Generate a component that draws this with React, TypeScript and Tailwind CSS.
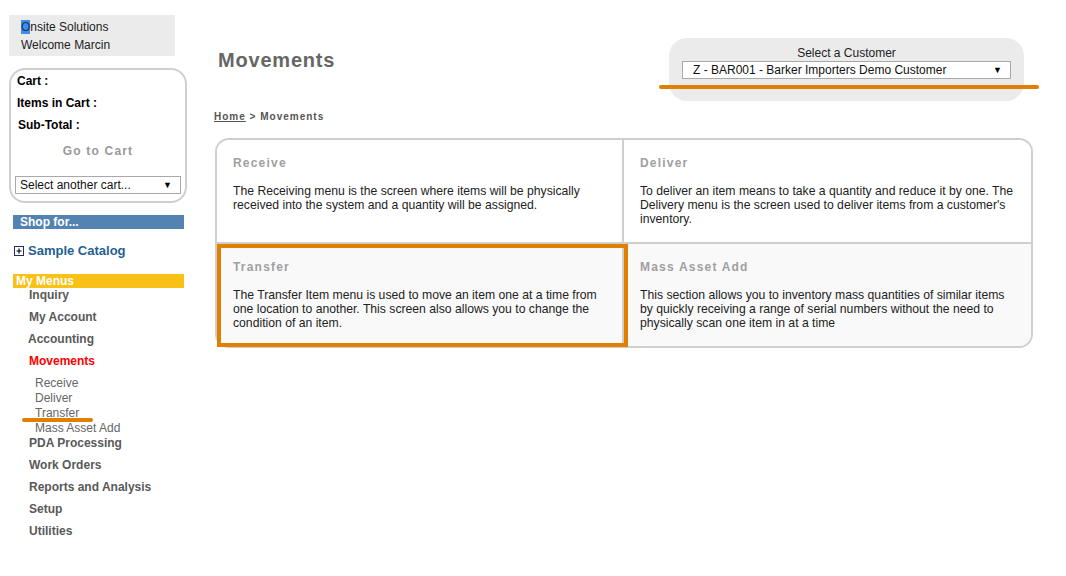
import React from 'react';

const menus = [
    { label: 'Inquiry', sub: false },
    { label: 'My Account', sub: false },
    { label: 'Accounting', sub: false, nudge: true },
    { label: 'Movements', sub: false, active: true },
    { label: 'Receive', sub: true },
    { label: 'Deliver', sub: true },
    { label: 'Transfer', sub: true, marked: true },
    { label: 'Mass Asset Add', sub: true },
    { label: 'PDA Processing', sub: false },
    { label: 'Work Orders', sub: false },
    { label: 'Reports and Analysis', sub: false },
    { label: 'Setup', sub: false },
    { label: 'Utilities', sub: false },
];

const tiles = [
    {
        title: 'Receive',
        text: 'The Receiving menu is the screen where items will be physically received into the system and a quantity will be assigned.',
    },
    {
        title: 'Deliver',
        text: "To deliver an item means to take a quantity and reduce it by one. The Delivery menu is the screen used to deliver items from a customer's inventory.",
    },
    {
        title: 'Transfer',
        text: 'The Transfer Item menu is used to move an item one at a time from one location to another. This screen also allows you to change the condition of an item.',
        marked: true,
    },
    {
        title: 'Mass Asset Add',
        text: 'This section allows you to inventory mass quantities of similar items by quickly receiving a range of serial numbers without the need to physically scan one item in at a time',
    },
];

const FakeSelect = ({ label, className }: { label: string; className: string }) => (
    <div className={`flex items-center justify-between border border-[#a9a9a9] bg-white text-[12px] leading-[16px] text-[#111] ${className}`}>
        <span>{label}</span>
        <span className="text-[9px] text-black">▼</span>
    </div>
);

const Sidebar = () => {
    return (
        <div className="w-[214px] shrink-0 pl-[9px] pt-[15px]">
            <div className="h-[41px] w-[166px] bg-[#ebebeb] px-[12px] pt-[3px] text-[12px] leading-[18px] text-[#222]">
                <div>
                    <span className="bg-[#3d8ee8] text-[#1b3560]">O</span>nsite Solutions
                </div>
                <div>Welcome Marcin</div>
            </div>

            <div className="mt-[12px] h-[135px] w-[178px] rounded-[16px] border-2 border-[#cfcfcf]">
                <div className="pl-[6px] text-[12px] font-bold leading-[22px] text-black">
                    <div>Cart :</div>
                    <div>Items in Cart :</div>
                    <div className="pl-[1px]">Sub-Total :</div>
                </div>
                <div className="h-[30px] text-center text-[12px] font-bold leading-[30px] tracking-[1.2px] text-[#999]">Go to Cart</div>
                <FakeSelect label="Select another cart..." className="mx-[4px] mt-[10px] h-[18px] pl-[4px] pr-[8px]" />
            </div>

            <div className="ml-[4px] mt-[12px] h-[14px] w-[171px] bg-[#5283b1] pl-[7px] text-[12px] font-bold leading-[14px] text-white">Shop for...</div>

            <div className="ml-[5px] mt-[12px] flex h-[20px] items-center gap-[4px]">
                <svg width="10" height="10" viewBox="0 0 10 10">
                    <rect x="0.5" y="0.5" width="9" height="9" fill="white" stroke="#1b2f6b" />
                    <path d="M2.5 5h5M5 2.5v5" stroke="#000" strokeWidth="1.2" />
                </svg>
                <span className="text-[13px] font-bold leading-[20px] text-[#1f5f96]">Sample Catalog</span>
            </div>

            <div className="ml-[4px] mt-[13px] h-[14px] w-[171px] bg-[#f9c016] pl-[3px] text-[12px] font-bold leading-[14px] text-white">My Menus</div>

            <div className="flex flex-col">
                {menus.map((m, i) => {
                    const prev = menus[i - 1];
                    let gap = 'mt-[8px]';
                    if (i === 0) gap = 'mt-0';
                    else if (prev.sub) gap = 'mt-[1px]';
                    return (
                        <div
                            key={m.label}
                            className={`relative h-[14px] text-[12px] leading-[14px] ${gap} ${
                                m.sub ? 'pl-[26px] font-normal text-[#666]' : m.nudge ? 'pl-[19px] font-bold' : 'pl-[20px] font-bold'
                            } ${m.active ? 'text-[#ff0000]' : m.sub ? '' : 'text-[#595959]'}`}
                        >
                            {m.label}
                            {m.marked && <div className="absolute left-[13px] top-[12px] h-[4px] w-[71px] rounded-full bg-[#e07f00]" />}
                        </div>
                    );
                })}
            </div>
        </div>
    );
};

const Tile = ({ title, text, marked, bottom, left }: { title: string; text: string; marked?: boolean; bottom: boolean; left: boolean }) => (
    <div
        className={`relative h-full px-[16px] pt-[16px] ${bottom ? 'bg-[#f9f9f9]' : 'border-b-2 border-[#cfcfcf] bg-white'} ${
            left ? 'border-r-2 border-r-[#cfcfcf]' : ''
        }`}
    >
        <div className="text-[12px] font-bold leading-[14px] tracking-[1.2px] text-[#a0a0a0]">{title}</div>
        <p className="mt-[14px] text-[12.2px] leading-[14px] text-[#222]">{text}</p>
        {marked && <div className="absolute -bottom-[1px] left-0 -right-[6px] top-0 z-10 border-4 border-[#e07f00]" />}
    </div>
);

export default function App() {
    return (
        <div className="flex min-h-[576px] bg-white font-['Liberation_Sans',Arial,sans-serif]">
            <Sidebar />
            <div className="w-[819px] pt-[38px]">
                <div className="flex items-start justify-between">
                    <h1 className="ml-[4px] mt-[10px] text-[20px] font-bold leading-[24px] tracking-[0.8px] text-[#666]">Movements</h1>
                    <div className="relative mr-[9px] h-[63px] w-[355px] rounded-[18px] bg-[#ebebeb] pt-[8px]">
                        <div className="text-center text-[12px] leading-[14px] text-[#222]">Select a Customer</div>
                        <FakeSelect label="Z - BAR001 - Barker Importers Demo Customer" className="mx-[13px] mt-[1px] h-[18px] pl-[10px] pr-[8px]" />
                        <div className="absolute -left-[10px] -right-[15px] top-[47px] h-[4px] rounded-full bg-[#e07f00]" />
                    </div>
                </div>

                <div className="mt-[10px] text-[10px] font-bold leading-[12px] tracking-[1px] text-[#555]">
                    <span className="underline">Home</span> &gt; Movements
                </div>

                <div className="ml-[1px] mt-[15px] w-[818px] rounded-[14px] border-2 border-[#cfcfcf]">
                    <div className="grid grid-cols-2 grid-rows-[104px_102px] rounded-[12px]">
                        {tiles.map((t, i) => (
                            <div key={t.title} className={`${i === 0 ? 'rounded-tl-[12px] overflow-hidden' : ''} ${i === 1 ? 'rounded-tr-[12px] overflow-hidden' : ''} ${i === 3 ? 'rounded-br-[12px] overflow-hidden' : ''}`}>
                                <Tile title={t.title} text={t.text} marked={t.marked} bottom={i > 1} left={i % 2 === 0} />
                            </div>
                        ))}
                    </div>
                </div>
            </div>
        </div>
    );
}
